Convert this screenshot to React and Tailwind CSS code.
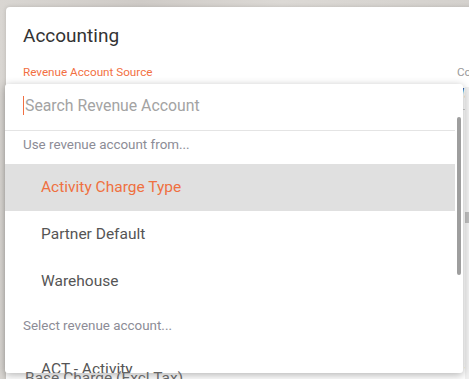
export default function App() {
  const font = { fontFamily: 'Roboto, "Liberation Sans", sans-serif' };
  return (
    <div
      className="relative h-[379px] w-[469px] overflow-hidden bg-[linear-gradient(90deg,#d9d6d2,#cfcbc7_30%,#dcd9d5_60%,#d4d1cd)]"
      style={font}
    >
      {/* Modal window */}
      <div className="relative ml-[6px] mt-[7px] flex h-[420px] w-[520px] flex-col rounded-tl-[4px] bg-white pl-[17px] pt-[17px] shadow-[0_0_4px_rgba(0,0,0,0.15)]">
        <div className="text-[19px] leading-[24px] text-[#333]">Accounting</div>
        <div className="mt-[17px] flex">
          <div className="w-[434px] text-[11.7px] leading-[14px] text-[#f26f42]">
            Revenue Account Source
          </div>
          <div className="text-[11.7px] leading-[14px] text-[#9a9a9a]">Cost</div>
        </div>
        <div className="mt-[6px] flex">
          <div className="w-[441px]" />
          <div className="border-b border-[#cfcfcf] pb-[6px] text-[15px] leading-[18px] text-[#3a3f6a]">
            Warehouse
          </div>
        </div>
        <div className="mt-[246px] flex">
          <div className="w-[441px] pl-[2px] text-[15.5px] leading-[18px] text-[#666]">
            Base Charge (Excl Tax)
          </div>
          <div className="text-[15px] leading-[18px] text-[#3a3f6a]">5</div>
        </div>
        {/* modal scroll track */}
        <div className="absolute left-[459px] top-[80px] h-[300px] w-[4px] bg-[#f1f1f1]">
          <div className="mt-[125px] h-[11px] w-[4px] bg-[#bdbdbd]" />
        </div>
      </div>

      {/* Dropdown panel */}
      <div className="absolute left-[5px] top-[84px] z-10 h-[289px] w-[458px] overflow-hidden rounded-[3px] bg-white shadow-[0_2px_8px_rgba(0,0,0,0.3)]">
        <div className="flex h-[46px] items-center pb-[3px] pl-[18px] text-[15.8px] text-[#a3a3a3]">
          <span className="mr-px h-[19px] w-px bg-[#f26f42]" />
          Search Revenue Account
        </div>
        <div className="mr-[8px] h-px bg-[#e4e4e4]" />
        <div className="flex h-[33px] items-start pl-[18px] pt-[6px] text-[13.4px] leading-[16px] text-[#8c8c96]">
          Use revenue account from...
        </div>
        <div className="mr-[8px] flex h-[47px] items-center bg-[#e0e0e0] pl-[36px] text-[15.5px] text-[#ef7040]">
          Activity Charge Type
        </div>
        <div className="mr-[8px] flex h-[47px] items-center pl-[36px] text-[15.5px] text-[#555]">
          Partner Default
        </div>
        <div className="mr-[8px] flex h-[47px] items-center pl-[36px] text-[15.5px] text-[#555]">
          Warehouse
        </div>
        <div className="flex h-[43px] items-center pl-[18px] text-[13.4px] text-[#8c8c96]">
          Select revenue account...
        </div>
        <div className="mr-[8px] flex h-[44px] items-center pl-[36px] text-[15.5px] text-[#555]">
          ACT - Activity
        </div>
        {/* scrollbar thumb */}
        <div className="absolute left-[452px] top-[33px] h-[158px] w-[4px] rounded-full bg-[#9e9e9e]" />
      </div>

      {/* modal content that bleeds over the panel's lower edge */}
      <div className="pointer-events-none absolute left-[25px] top-[367px] z-20 h-[12px] overflow-hidden text-[15.5px] leading-[18px] text-[#666]">
        <div className="pt-[2px]">Base Charge (Excl Tax)</div>
      </div>
    </div>
  );
}
